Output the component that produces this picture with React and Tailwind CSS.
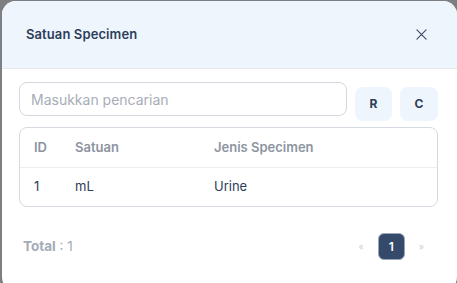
import React from 'react';

const rows = [{ id: 1, satuan: 'mL', jenis: 'Urine' }];

const App = () => {
  return (
    <div
      className="w-[457px] h-[283px] bg-[#7d7f82] pl-[2px] pt-[1px] overflow-hidden"
      style={{ fontFamily: 'Inter, "Open Sans", sans-serif' }}
    >
      <div className="w-[455px] h-[290px] bg-white rounded-[14px] overflow-hidden flex flex-col">
        {/* Header */}
        <div className="h-[68px] bg-[#eff5fd] border-b border-[#e5e9ef] flex items-center justify-between pl-[24px] pr-[30px]">
          <h2 className="text-[13px] font-semibold text-[#2c3d5a] tracking-[0.1px]">Satuan Specimen</h2>
          <svg width="11" height="11" viewBox="0 0 12 12" className="text-[#3a4a63]">
            <path d="M1 1L11 11M11 1L1 11" stroke="currentColor" strokeWidth="1.2" strokeLinecap="round" />
          </svg>
        </div>

        <div className="px-[17px] pt-[13px]">
          {/* Search */}
          <div className="flex items-start gap-[8px]">
            <input
              className="w-[328px] h-[34px] rounded-lg border border-[#d3d8df] px-[11px] text-[14px] text-[#334155] placeholder-[#a7adb8] outline-none"
              placeholder="Masukkan pencarian"
            />
            <button className="mt-[5px] w-[37px] h-[34px] rounded-lg bg-[#eff5fd] text-[12px] font-bold text-[#2c3d5a]">R</button>
            <button className="mt-[5px] w-[38px] h-[34px] rounded-lg bg-[#eff5fd] text-[12px] font-bold text-[#2c3d5a]">C</button>
          </div>

          {/* Table */}
          <div className="mt-[6px] w-[419px] border border-[#d5dae1] rounded-lg overflow-hidden">
            <div className="h-[40px] flex items-center border-b border-[#eceef2] text-[13px] font-semibold text-[#8d94a1]">
              <div className="w-[55px] pl-[14px]">ID</div>
              <div className="w-[139px]">Satuan</div>
              <div>Jenis Specimen</div>
            </div>
            {rows.map((r) => (
              <div key={r.id} className="h-[38px] flex items-center text-[13px] text-[#2c3d5a]">
                <div className="w-[55px] pl-[14px]">{r.id}</div>
                <div className="w-[139px]">{r.satuan}</div>
                <div>{r.jenis}</div>
              </div>
            ))}
          </div>

          {/* Footer */}
          <div className="mt-[26px] flex items-center justify-between pl-[4px] pr-[16px]">
            <div className="text-[13.5px] text-[#a4abb6]">
              <span className="font-bold">Total</span> : 1
            </div>
            <div className="flex items-center gap-[14px]">
              <span className="text-[9px] text-[#c9d2e0]">«</span>
              <button className="w-[27px] h-[27px] rounded-md bg-[#354a6b] border border-[#9aa6b8] text-[12px] font-semibold text-white">1</button>
              <span className="text-[9px] text-[#c9d2e0]">»</span>
            </div>
          </div>
        </div>
      </div>
    </div>
  );
};

export default App;
